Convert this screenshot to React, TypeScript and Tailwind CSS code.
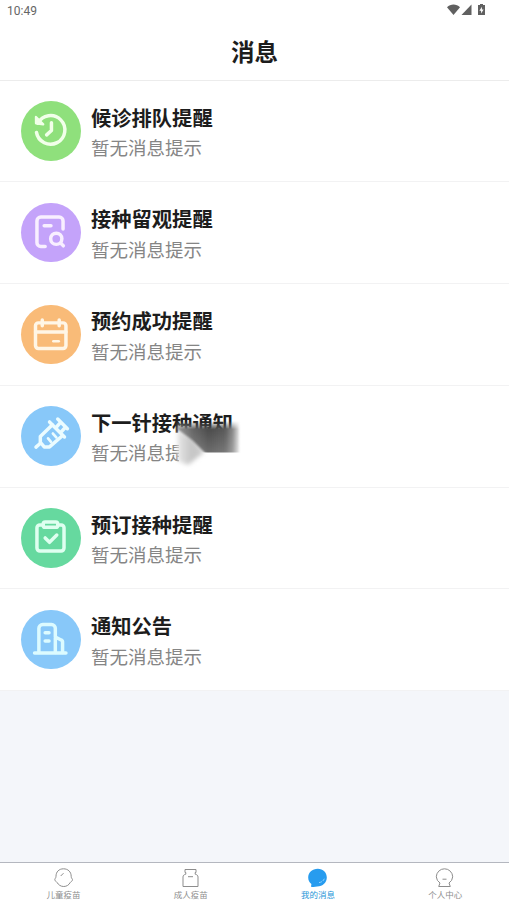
import type { ReactNode } from "react";

const messages = [
  { title: "候诊排队提醒", color: "bg-[#8fe07c]", stroke: "#f1ffe9", icon: <HistoryIcon /> },
  { title: "接种留观提醒", color: "bg-[#c4a3fa]", stroke: "#f8efff", icon: <RecordIcon /> },
  { title: "预约成功提醒", color: "bg-[#f9bb78]", stroke: "#fff6e6", icon: <CalendarIcon /> },
  { title: "下一针接种通知", color: "bg-[#88c8f9]", stroke: "#ebfcff", icon: <SyringeIcon />, smudged: true },
  { title: "预订接种提醒", color: "bg-[#66d99f]", stroke: "#dffff0", icon: <ClipboardIcon /> },
  { title: "通知公告", color: "bg-[#88c8f9]", stroke: "#dcfbff", icon: <BuildingIcon /> },
];

const tabs = [
  { label: "儿童疫苗", icon: <BabyIcon /> },
  { label: "成人疫苗", icon: <BottleIcon /> },
  { label: "我的消息", icon: <ChatIcon />, active: true },
  { label: "个人中心", icon: <PersonIcon /> },
];

function HistoryIcon() {
  return (
    <>
      <path d="M17.500 23A14.800 14.800 0 1 1 16 32.500" />
      <path d="M15.500 16.500v6.500l7.500 1.200Z" fill="currentColor" strokeWidth="2.400" />
      <path d="M31.500 22.500v8l-5 4.500" />
    </>
  );
}

function RecordIcon() {
  return (
    <>
      <path d="M25 45H20.500a4 4 0 0 1-4-4V18.500a4 4 0 0 1 4-4h19a4 4 0 0 1 4 4V27" />
      <path d="M24 23.500h7" />
      <circle cx="36.500" cy="37" r="5.800" />
      <path d="m41 41.500 2.800 2.800" />
    </>
  );
}

function CalendarIcon() {
  return (
    <>
      <rect x="15" y="18.500" width="31.500" height="26.500" rx="3" />
      <path d="M15 28h31.500M22 15.500v6M39.500 15.500v6" />
      <path d="M33.500 37.500h5.500" strokeWidth="2.800" />
    </>
  );
}

function SyringeIcon() {
  return (
    <>
      <path d="m15.500 42.500 4-3.500" />
      <path d="M32.500 19.500 20 31.500v6l4 4.800h5.500L42.500 31" />
      <path d="m29.500 16.500 15.500 15.500M36 22.500l4.500-5M41 27.500l4.500-5M38 13.500l10 10" />
      <path d="m28 33.500 3 3.500M33 28.500l3.500 4" strokeWidth="2.800" />
    </>
  );
}

function ClipboardIcon() {
  return (
    <>
      <path d="M23 17.500h-3.500a3 3 0 0 0-3 3v21a3 3 0 0 0 3 3h22a3 3 0 0 0 3-3v-21a3 3 0 0 0-3-3H38" />
      <rect x="23" y="14.500" width="15" height="5.500" rx="2" />
      <path d="m25 31 4.500 4.500 7.500-7.500" />
    </>
  );
}

function BuildingIcon() {
  return (
    <>
      <path d="M14 44.500h32.500" />
      <path d="M18.500 44V19a4 4 0 0 1 4-4h9a4 4 0 0 1 4 4v25M35.500 28l6 3a2.500 2.500 0 0 1 1.500 2.500V44" />
      <path d="M25 23.500h4M25 32h4" />
    </>
  );
}

function BabyIcon() {
  return (
    <>
      <path d="M10 .8C5.500.8 2.500 3.800 2.500 8.300c0 1-.3 1.500-.8 2.200-.6.900-.5 1.800.1 2.300.6.500 1.100.8 1.700 1.600 1.500 2.500 3.700 4.100 6.700 4.100s5.100-1.500 6.500-3.900c.4-.7.900-1 1.500-1.400.9-.6 1.100-1.500.4-2.400-.6-.7-.9-1.300-.9-2.400C17.700 3.800 14.500.8 10 .8Z" />
      <path d="M7.200 8 10 5.200" />
    </>
  );
}

function BottleIcon() {
  return (
    <>
      <path d="M4.500 1.500h11v3h-.8v1.700c1.800.4 2.800 1.200 2.800 2.800v9.500h-15V9c0-1.600 1-2.400 2.800-2.800V4.500h-.8Z" />
      <path d="M7.500 8.700h5" />
    </>
  );
}

function ChatIcon() {
  return (
    <>
      <path d="M10.300.8C4.800.8.7 4.600.7 9.500c0 2.700 1.200 5 3.200 6.600l-.4 2.700c2 .3 4.200.2 6.200-.2 5.700-.2 9.600-4.100 9.600-9.100S15.600.8 10.300.8Z" fill="#279cef" stroke="none" />
      <path d="M11.500 14.600c2.700-.4 4.400-1.700 5.300-3.900" stroke="#8fd3ff" strokeDasharray="3 1" />
    </>
  );
}

function PersonIcon() {
  return (
    <>
      <path d="M5.500 15A8.200 8.200 0 0 1 1.800 8.800 8.200 8.200 0 0 1 10 .8a8.200 8.200 0 0 1 8.200 8A8.200 8.200 0 0 1 14.500 15l1.300 3.500H4.200Z" />
      <path d="M8 11.200h4" />
    </>
  );
}

function StatusBar() {
  return (
    <div className="flex h-[22px] items-center justify-between pl-[7px] pr-[23px] text-[#666]">
      <span className="font-['Roboto','Noto_Sans_CJK_SC',sans-serif] text-[12px] leading-none">10:49</span>
      <svg width="40" height="14" viewBox="0 0 40 14" fill="#606060" className="-mt-0.5">
        <path d="M1 4.200C4.500.6 10.500.6 14 4.200L7.500 12Z" />
        <path d="M25.500 1.500V12H15.500Z" />
        <path d="M32 2h2V1h3v1h2v10h-7Z" />
        <path d="m35.900 3.700-2.500 4h1.700v2.800l2.500-4h-1.700Z" fill="#fff" />
      </svg>
    </div>
  );
}

// Fades out the tail of the row text behind a dark and a light sweep.
function Smudge() {
  return (
    <svg className="absolute left-[170px] top-[30px]" width="90" height="58" viewBox="0 0 90 58">
      <defs>
        <linearGradient id="sweep" x1="7" x2="71" y1="0" y2="0" gradientUnits="userSpaceOnUse">
          <stop offset="0" stopColor="#999" />
          <stop offset=".25" stopColor="#666" />
          <stop offset=".5" stopColor="#4c4c4c" />
          <stop offset=".75" stopColor="#5a5a5a" />
          <stop offset=".87" stopColor="#8a8a8a" />
          <stop offset="1" stopColor="#fff" />
        </linearGradient>
        <linearGradient id="tail" x1="8" x2="34" y1="0" y2="0" gradientUnits="userSpaceOnUse">
          <stop offset="0" stopColor="#e6e6e6" />
          <stop offset=".5" stopColor="#c6c6c6" />
          <stop offset="1" stopColor="#ccc" />
        </linearGradient>
        <linearGradient id="topFade" x1="0" x2="0" y1="0" y2="1">
          <stop offset="0" stopColor="#fff" stopOpacity="0" />
          <stop offset=".26" stopColor="#fff" stopOpacity="1" />
          <stop offset="1" stopColor="#fff" stopOpacity=".82" />
        </linearGradient>
        <mask id="sweepMask" maskUnits="userSpaceOnUse" x="0" y="0" width="90" height="58">
          <path d="M0 5h90v31.500H0Z" fill="url(#topFade)" />
        </mask>
        <filter id="soften" x="-20%" y="-20%" width="140%" height="140%">
          <feGaussianBlur stdDeviation=".8" />
        </filter>
        <filter id="spread" x="-30%" y="-30%" width="160%" height="160%">
          <feGaussianBlur stdDeviation="2" />
        </filter>
      </defs>
      <path d="M9 14h61v43H9Z" fill="#fff" />
      <path d="M7 14 22 22 34 36.500 18 49 8 45Z" fill="url(#tail)" filter="url(#spread)" />
      <g mask="url(#sweepMask)">
        <path d="M7 0h62v44H42L22 24 7 13Z" fill="url(#sweep)" filter="url(#soften)" />
      </g>
    </svg>
  );
}

function MessageRow({ title, color, stroke, icon, smudged }: { title: string; color: string; stroke: string; icon: ReactNode; smudged?: boolean }) {
  return (
    <li className="relative flex h-[101.75px] items-center border-b border-[#f2f2f3] bg-white pl-[21.2px]">
      <div className={`h-[59.5px] w-[59.5px] shrink-0 rounded-full ${color}`}>
        <svg width="58" height="58" viewBox="0 0 60 60" fill="none" color={stroke} stroke={stroke} strokeWidth="3.600" strokeLinecap="round" strokeLinejoin="round">{icon}</svg>
      </div>
      <div className="ml-[10.3px] pt-[2px]">
        <h2 className="text-[20.3px] font-bold leading-[30.5px] text-[#1d1d1d]">{title}</h2>
        <p className="text-[18.5px] leading-[30px] text-[#858585]">暂无消息提示</p>
      </div>
      {smudged && <Smudge />}
    </li>
  );
}

export default function App() {
  return (
    <div className="flex h-[905px] w-full flex-col overflow-hidden bg-[#f4f6fa] font-['Noto_Sans_CJK_SC',sans-serif]">
      <header className="h-[80.6px] shrink-0 border-b border-[#ececec] bg-white">
        <StatusBar />
        <h1 className="text-center text-[23.5px] font-bold leading-[58px] text-[#1d1d1d]">消息</h1>
      </header>
      <ul className="flex-1">
        {messages.map((message) => <MessageRow key={message.title} {...message} />)}
      </ul>
      <nav className="grid h-[43px] shrink-0 grid-cols-4 border-t border-[#b4b7bf] bg-white">
        {tabs.map((tab) => (
          <div key={tab.label} className={`flex flex-col items-center pt-[5px] ${tab.active ? "text-[#2595d8]" : "text-[#8d8d8d]"}`}>
            <svg width="20" height="20" viewBox="0 0 20 20" fill="none" stroke="currentColor" strokeWidth="1" strokeLinejoin="round" className="-translate-x-[0.5px]">{tab.icon}</svg>
            <span className="text-[8.5px] leading-[12px]">{tab.label}</span>
          </div>
        ))}
      </nav>
    </div>
  );
}
